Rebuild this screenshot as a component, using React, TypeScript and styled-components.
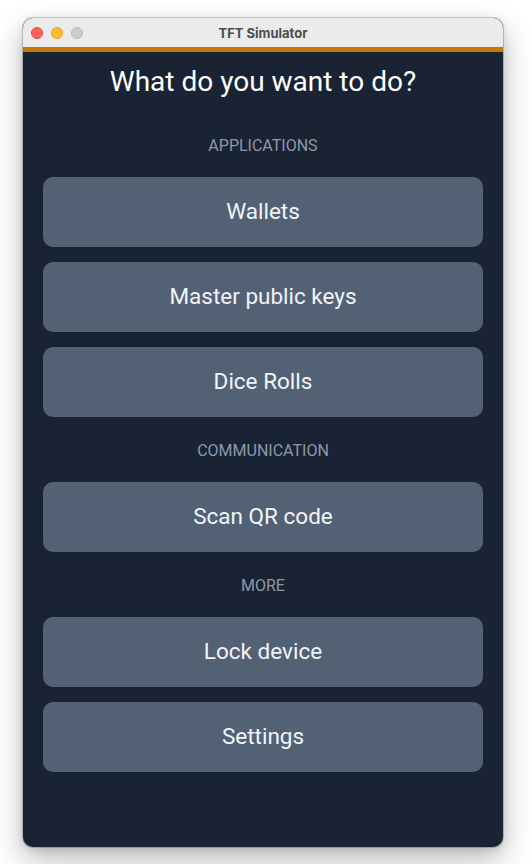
import React from "react";
import styled, { createGlobalStyle } from "styled-components";

const Global = createGlobalStyle`
  html, body { margin: 0; padding: 0; background: #ffffff; }
  body { font-family: Roboto, "Noto Sans", sans-serif; }
  * { box-sizing: border-box; }
`;

const Page = styled.div`
  width: 532px;
  height: 864px;
  padding: 18px 0 0 23px;
`;

const Window = styled.div`
  width: 480px;
  height: 829px;
  border-radius: 10px;
  overflow: hidden;
  display: flex;
  flex-direction: column;
  background: #1a2333;
  box-shadow: 0 0 0 1px rgba(0, 0, 0, 0.18), 0 12px 30px rgba(0, 0, 0, 0.28),
    0 2px 8px rgba(0, 0, 0, 0.12);
`;

const TitleBar = styled.div`
  height: 29px;
  flex: none;
  display: grid;
  grid-template-columns: 1fr auto 1fr;
  align-items: center;
  background: #ebebeb;
  border-bottom: 5px solid #c8780a;
  box-sizing: content-box;
`;

const Lights = styled.div`
  display: flex;
  gap: 8px;
  padding-left: 8px;
`;

const Light = styled.span<{ $c: string; $b: string }>`
  width: 12px;
  height: 12px;
  border-radius: 50%;
  background: ${(p) => p.$c};
  border: 0.5px solid ${(p) => p.$b};
`;

const Title = styled.div`
  font-family: Inter, "Liberation Sans", sans-serif;
  font-weight: 700;
  font-size: 13px;
  color: #4b4b4b;
`;

const Content = styled.div`
  flex: 1;
  display: flex;
  flex-direction: column;
  padding: 13px 20px 0;
`;

const Heading = styled.h1`
  margin: 0 0 13px;
  font-size: 28px;
  line-height: 34px;
  font-weight: 400;
  color: #ffffff;
  text-align: center;
`;

const SectionLabel = styled.div`
  padding: 25px 0 22px;
  font-size: 16px;
  line-height: 18px;
  color: #8d99aa;
  text-align: center;
  text-transform: uppercase;
`;

const ButtonList = styled.div`
  display: flex;
  flex-direction: column;
  gap: 15px;
`;

const MenuButton = styled.button`
  height: 70px;
  padding: 0 0 2px;
  border: none;
  border-radius: 10px;
  background: #536175;
  color: #f2f4f7;
  font-family: Roboto, "Noto Sans", sans-serif;
  font-size: 22.5px;
  cursor: pointer;
`;

const sections = [
  { label: "Applications", items: ["Wallets", "Master public keys", "Dice Rolls"] },
  { label: "Communication", items: ["Scan QR code"] },
  { label: "More", items: ["Lock device", "Settings"] },
];

export default function App() {
  return (
    <Page>
      <Global />
      <Window>
        <TitleBar>
          <Lights>
            <Light $c="#ff5f57" $b="#e2463f" />
            <Light $c="#febc2e" $b="#e1a116" />
            <Light $c="#cdcdcd" $b="#b8b8b8" />
          </Lights>
          <Title>TFT Simulator</Title>
          <div />
        </TitleBar>
        <Content>
          <Heading>What do you want to do?</Heading>
          {sections.map((s) => (
            <React.Fragment key={s.label}>
              <SectionLabel>{s.label}</SectionLabel>
              <ButtonList>
                {s.items.map((i) => (
                  <MenuButton key={i}>{i}</MenuButton>
                ))}
              </ButtonList>
            </React.Fragment>
          ))}
        </Content>
      </Window>
    </Page>
  );
}
